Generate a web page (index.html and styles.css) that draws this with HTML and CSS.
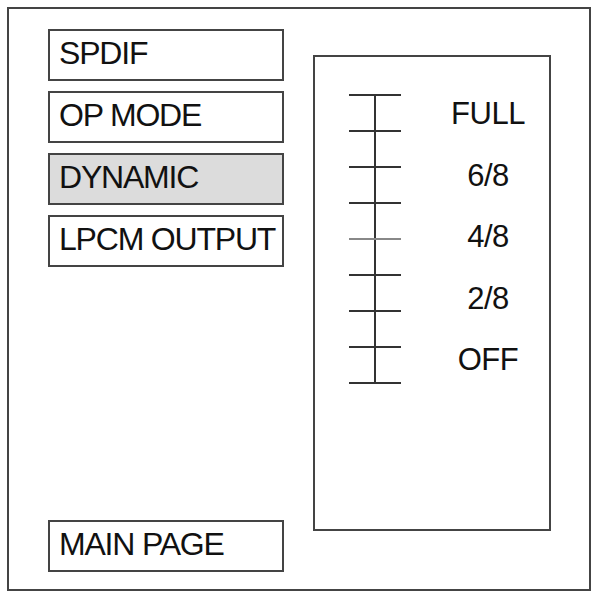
FILE: index.html
```html
<!DOCTYPE html>
<html lang="en">
<head>
    <meta charset="UTF-8">
    <title>Dynamic</title>
    <link rel="stylesheet" href="styles.css">
</head>
<body>
    <div class="screen">
        <div class="menu">
            <div class="item">SPDIF</div>
            <div class="item">OP MODE</div>
            <div class="item selected">DYNAMIC</div>
            <div class="item">LPCM OUTPUT</div>
            <div class="item main-page">MAIN PAGE</div>
        </div>
        <div class="panel">
            <svg class="scale" width="52" height="290" viewBox="0 0 52 290">
                <line x1="26" y1="1" x2="26" y2="289" stroke="#333" stroke-width="2"/>
                <line x1="0" y1="1" x2="52" y2="1" stroke="#333" stroke-width="2"/>
                <line x1="0" y1="37" x2="52" y2="37" stroke="#333" stroke-width="2"/>
                <line x1="0" y1="73" x2="52" y2="73" stroke="#333" stroke-width="2"/>
                <line x1="0" y1="109" x2="52" y2="109" stroke="#333" stroke-width="2"/>
                <line x1="0" y1="145" x2="52" y2="145" stroke="#888" stroke-width="2"/>
                <line x1="0" y1="181" x2="52" y2="181" stroke="#333" stroke-width="2"/>
                <line x1="0" y1="217" x2="52" y2="217" stroke="#333" stroke-width="2"/>
                <line x1="0" y1="253" x2="52" y2="253" stroke="#333" stroke-width="2"/>
                <line x1="0" y1="289" x2="52" y2="289" stroke="#333" stroke-width="2"/>
            </svg>
            <div class="labels">
                <div>FULL</div>
                <div>6/8</div>
                <div>4/8</div>
                <div>2/8</div>
                <div>OFF</div>
            </div>
        </div>
    </div>
</body>
</html>
```

FILE: styles.css
```css
body {
    margin: 0;
    background: #fff;
    font-family: 'Liberation Sans', Arial, sans-serif;
    color: #111;
}
.screen {
    box-sizing: border-box;
    width: 584px;
    height: 584px;
    margin: 7px;
    border: 2px solid #444;
    display: flex;
    padding: 20px 0 17px 39px;
}
.menu {
    display: flex;
    flex-direction: column;
    gap: 10px;
    width: 236px;
}
.item {
    box-sizing: border-box;
    height: 52px;
    border: 2px solid #444;
    padding: 0 0 3px 9px;
    display: flex;
    align-items: center;
    font-size: 32px;
    letter-spacing: -1.2px;
}
.selected {
    background: #dcdcdc;
}
.main-page {
    margin-top: auto;
}
.panel {
    box-sizing: border-box;
    width: 238px;
    height: 476px;
    margin: 26px 0 0 29px;
    border: 2px solid #444;
    display: flex;
    align-items: flex-start;
}
.scale {
    margin: 37px 0 0 34px;
}
.labels {
    margin: 26px 0 0 39px;
    width: 96px;
    text-align: center;
    font-size: 31px;
    letter-spacing: -0.5px;
}
.labels div {
    height: 61.5px;
    line-height: 61.5px;
}
```
